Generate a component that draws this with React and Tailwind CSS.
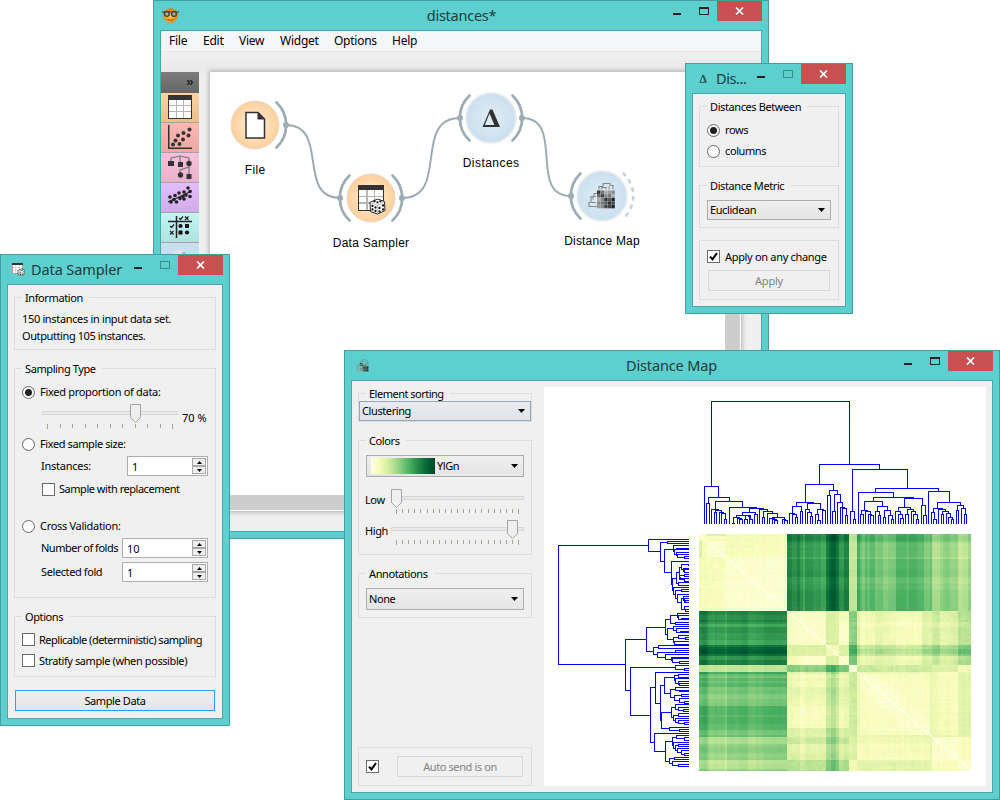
import React from "react";

/* ---------- window chrome ---------- */

function Win({ className, title, titleClass, icon, active, bodyClass, children }) {
  return (
    <section className={"absolute flex flex-col border border-[#449e9d] bg-[#5ccfce] px-[6px] pb-[6px] " + className}>
      <header className="relative flex h-[29px] shrink-0 items-center">
        {icon}
        <h1 className={"whitespace-nowrap font-['Noto_Sans',sans-serif] text-[14.5px] leading-[29px] text-[#1d3c3c] " + titleClass}>{title}</h1>
        <div className="absolute right-0 top-0 flex">
          <span className="mt-[12px] h-[2px] w-[8px] bg-[#222]" />
          <span className={"ml-[18px] mt-[6px] mr-[8px] h-[8px] w-[10px] border " + (active ? "border-t-2 border-[#222]" : "border-[#3e8b8a]")} />
          <span className="flex h-[20px] w-[45px] items-center justify-center bg-[#c75050]">
            <svg width="9" height="8" viewBox="0 0 9 8"><path d="M1 .5l7 7M8 .5l-7 7" stroke="#fff" strokeWidth="1.7" /></svg>
          </span>
        </div>
      </header>
      <div className={"flex min-h-0 flex-1 border border-[#45a9a8] bg-[#f0f0f0] " + bodyClass}>{children}</div>
    </section>
  );
}

/* ---------- form controls ---------- */

function Group({ title, className, legendClass = "", children }) {
  return (
    <fieldset className={"min-w-0 shrink-0 border border-[#dcdcdc] " + className}>
      {title && <legend className={"ml-[7px] h-[15px] whitespace-nowrap pl-[3px] pr-[6px] leading-[15px] " + legendClass}>{title}</legend>}
      <div className="flex flex-col">{children}</div>
    </fieldset>
  );
}

function Radio({ checked }) {
  return (
    <svg className="shrink-0" width="13" height="13" viewBox="0 0 13 13">
      <circle cx="6.5" cy="6.5" r="6" fill="#fff" stroke="#666" />
      {checked && <circle cx="6.5" cy="6.5" r="3.5" fill="#222" />}
    </svg>
  );
}

function Check({ checked }) {
  return (
    <span className="flex h-[13px] w-[13px] shrink-0 items-center justify-center border border-[#6b6b6b] bg-white">
      {checked && (
        <svg width="9" height="9" viewBox="0 0 9 9"><path d="M1 4.6l2.5 2.7L8 1" fill="none" stroke="#000" strokeWidth="2" /></svg>
      )}
    </span>
  );
}

function Combo({ className, children }) {
  return (
    <div className={"flex shrink-0 items-center border pl-[2px] pr-[5px] " + className}>
      {children}
      <svg className="ml-auto" width="7" height="4" viewBox="0 0 7 4"><path d="M0 0h7L3.500 4z" fill="#000" /></svg>
    </div>
  );
}

function Spin({ value, className }) {
  return (
    <div className={"flex h-[20px] shrink-0 border border-[#abadb3] bg-white p-px " + className}>
      <span className="flex-1 pl-[3px] leading-[17px] tracking-[0px]">{value}</span>
      <span className="flex w-[14px] flex-col">
        <span className="flex h-[8px] items-center justify-center border border-[#a8a8a8] bg-[#efefef]">
          <svg width="5" height="3" viewBox="0 0 5 3"><path d="M0 3h5L2.500 0z" fill="#000" /></svg>
        </span>
        <span className="flex h-[8px] items-center justify-center border border-[#a8a8a8] bg-[#efefef]">
          <svg width="5" height="3" viewBox="0 0 5 3"><path d="M0 0h5L2.500 3z" fill="#000" /></svg>
        </span>
      </span>
    </div>
  );
}

function Slider({ width, handle, first, step, count, className = "" }) {
  return (
    <svg className={"shrink-0 " + className} width={width} height="26" viewBox={`0 0 ${width} 26`}>
      <rect x=".5" y="7.500" width={width - 1} height="3" fill="#e7eaea" stroke="#d6d6d6" />
      {Array.from({ length: count }, (_, i) => (
        <rect key={i} x={Math.round(first + i * step)} y="20" width="1" height={i === 0 || i === count - 1 ? 5 : 4} fill="#a5a58f" shapeRendering="crispEdges" />
      ))}
      <path d={`M${handle + 0.5} .5h10v13l-5 5-5-5z`} fill="#efefef" stroke="#a3a3a3" />
    </svg>
  );
}

/* ---------- icons ---------- */

const OrangeLogo = () => (
  <svg className="ml-[2px] shrink-0" width="17" height="17" viewBox="0 0 17 17">
    <defs>
      <radialGradient id="og" cx=".45" cy=".6"><stop offset="0" stopColor="#ffc04a" /><stop offset="1" stopColor="#e8820c" /></radialGradient>
    </defs>
    <circle cx="8.500" cy="8.500" r="7.300" fill="url(#og)" />
    <path d="M0 5h17" stroke="#444" strokeWidth="1.200" />
    <circle cx="4.800" cy="7" r="2.300" fill="#b5aea2" stroke="#3b3b3b" strokeWidth="1.300" />
    <circle cx="12" cy="7" r="2.300" fill="#b5aea2" stroke="#3b3b3b" strokeWidth="1.300" />
    <path d="M5.500 12.500q3 1.600 6 0" fill="none" stroke="#b04a08" strokeWidth="1" />
  </svg>
);

const TableGlyph = () => (
  <g shapeRendering="crispEdges">
    <rect x=".5" y=".5" width="23" height="23" fill="#fff" stroke="#333" />
    <rect x="0" y="0" width="24" height="5" fill="#333" />
    <path d="M1 10.500h22M1 16.500h22M8.500 5v18M15.500 5v18" stroke="#b5b5b5" fill="none" />
  </g>
);

const Dots = ({ pts, r = 2, fill = "#333" }) => pts.map(([x, y], i) => <circle key={i} cx={x} cy={y} r={r} fill={fill} />);

const toolIcons = [
  { bg: "from-[#ffd39f] to-[#e9bf90]", art: <TableGlyph /> },
  {
    bg: "from-[#ffb7b1] to-[#eba8a3]",
    art: <g><path d="M.75 0v23.250H24" fill="none" stroke="#333" strokeWidth="1.500" /><Dots pts={[[5, 19.500], [7.500, 15.500], [11.500, 19], [10, 10.500], [15, 14.500], [15.500, 8], [20.500, 10.500], [21.500, 4.500]]} /></g>,
  },
  {
    bg: "from-[#fbc0dc] to-[#e8b2cb]",
    art: (
      <g><path d="M3 8V3l9-2 9 2v5M12 1v8M12 19v-4l9-3v8M21 8v6" fill="none" stroke="#777" strokeWidth="1.200" />
        <path d="M0 6h6v5H0zM10 7h5v5h-5zM18.500 19h5v5h-5z" fill="#333" /><circle cx="21" cy="8.500" r="2.700" fill="#333" /><circle cx="12.500" cy="20" r="2.700" fill="#333" /></g>
    ),
  },
  {
    bg: "from-[#e3bdfd] to-[#d0ace8]",
    art: <g><path d="M0 17L24 6" stroke="#333" strokeWidth="1.300" /><Dots r={1.8} fill="#222" pts={[[2, 12], [3, 17], [6, 14.500], [8.500, 17], [7, 10.500], [11, 8], [12, 13.500], [15, 11.500], [16, 7], [18, 10], [20, 3], [22, 6.500], [22, 11.500], [16, 14]]} /></g>,
  },
  {
    bg: "from-[#c4f4f4] to-[#b0e2e2]",
    art: (
      <g><path d="M0 6.500h24M8.500 1v22" stroke="#222" strokeWidth="1.500" />
        <path d="M11 3l1.500 1.500L15 1.500M2 11l1.500 1.500L6 9.500M17 1.500l3.500 3.500M20.500 1.500L17 5M2 16l3.500 3.500M5.500 16L2 19.500" fill="none" stroke="#222" strokeWidth="1.200" />
        <circle cx="12.500" cy="11" r="2.100" fill="#111" /><rect x="17" y="9" width="4" height="4" fill="#111" /><rect x="10.500" y="15.500" width="4" height="4" fill="#111" /><circle cx="19" cy="17.500" r="2.100" fill="#111" /></g>
    ),
  },
];

const Die = () => (
  <g>
    <path d="M8 .5L15 3l.5 9L8 15.500 1 13 .5 4z" fill="#fff" stroke="#222" />
    <path d="M1 4l7 3 7-4M8 7v8" fill="none" stroke="#999" strokeWidth=".6" />
    {[[5, 2.8], [8, 3.800], [11, 2.800], [3, 7.500], [6, 9], [3, 11], [6, 12.500], [10, 9.500], [13.500, 7], [10, 13], [13.500, 11]].map(([x, y], i) => <circle key={i} cx={x} cy={y} r="1.150" fill="#111" />)}
  </g>
);

const MapGlyph = () => {
  const tones = ["#333", "#777", "#aaa", "#999", "#888", "#666", "#444", "#888", "#777", "#aaa", "#aaa", "#888", "#333", "#555", "#222", "#888", "#777", "#555", "#333", "#444", "#999", "#888", "#444", "#444", "#222"];
  return (
    <g>
      <path d="M10 7V4h4V1h7v2h3v4M13 7V5h4v2M20 7V4M8 11H5v3H2v6H0v4h8M7 14H4v3M7 20H3" fill="none" stroke="#888" strokeWidth="1.100" />
      {tones.map((t, i) => <rect key={i} x={8 + (i % 5) * 3.6} y={8 + Math.floor(i / 5) * 3.6} width="3.400" height="3.400" fill={t} />)}
    </g>
  );
};

/* ---------- workflow canvas ---------- */

function Node({ x, y, kind, inp, out, label, ly, lw, children }) {
  return (
    <g>
      <circle cx={x} cy={y} r="24" fill={kind === "data" ? "url(#nd)" : "url(#nu)"} stroke={kind === "data" ? "#dbd6cf" : "#d9e3ea"} filter={kind === "data" ? undefined : "url(#sh)"} strokeWidth=".8" />
      {inp && <g><path d={`M${x - 21.5} ${y - 22.500}A31 31 0 0 0 ${x - 21.5} ${y + 22.500}`} fill="none" stroke="#9cacb4" strokeWidth="2.700" strokeLinecap="round" /><circle cx={x - 31} cy={y} r="3" fill="#9cacb4" /></g>}
      {out && <path d={`M${x + 21.5} ${y - 22.500}A31 31 0 0 1 ${x + 21.5} ${y + 22.500}`} fill="none" stroke={out === "open" ? "#cbd4d9" : "#9cacb4"} strokeWidth="2.700" strokeLinecap="round" strokeDasharray={out === "open" ? "2.500 6.200" : undefined} />}
      {out === "linked" && <circle cx={x + 31} cy={y} r="3" fill="#9cacb4" />}
      {children}
      <text x={x - 0.3} y={ly} textAnchor="middle" textLength={lw} className="fill-black font-['Liberation_Sans',sans-serif] text-[12px]">{label}</text>
    </g>
  );
}

function Workflow() {
  return (
    <svg className="block" width="515" height="423" viewBox="210 72 515 423">
      <defs>
        <radialGradient id="nd"><stop offset="0" stopColor="#fff0df" /><stop offset="1" stopColor="#ffd09a" /></radialGradient>
        <radialGradient id="nu"><stop offset="0" stopColor="#e3edf4" /><stop offset="1" stopColor="#c9e0ef" /></radialGradient>
        <filter id="sh" x="-20%" y="-20%" width="140%" height="140%"><feDropShadow dx="0" dy="0" stdDeviation="1.500" floodColor="#8fa0aa" floodOpacity=".6" /></filter>
      </defs>
      <g fill="none" stroke="#9cacb4" strokeWidth="2">
        <path d="M286 125C330 125 296 198 340 198" />
        <path d="M402 198C450 198 412 118 460 118" />
        <path d="M522 118C566 118 527 196 571 196" />
      </g>
      <Node x={255} y={125} kind="data" out="linked" label="File" ly={174} lw={20}>
        <path d="M246 112.500h12l6.500 6.500v19H246z" fill="#fff" stroke="#333" strokeWidth="1.500" /><path d="M257.500 112v7.500h7.500z" fill="#333" />
      </Node>
      <Node x={371} y={198} kind="data" inp out="linked" label="Data Sampler" ly={247} lw={76}>
        <g transform="translate(357.500 184.500) scale(1.120)"><TableGlyph /></g>
        <g transform="translate(369.500 198.500)"><Die /></g>
      </Node>
      <Node x={491} y={118} kind="un" inp out="linked" label="Distances" ly={167} lw={56}>
        <path fillRule="evenodd" d="M490 109.500h2.500l7.500 17.500H482.500zM489.500 113.500L484.800 125h9.600z" fill="#333" />
      </Node>
      <Node x={602} y={196} kind="un" inp out="open" label="Distance Map" ly={245} lw={75}>
        <g transform="translate(589 182.500)"><MapGlyph /></g>
      </Node>
    </svg>
  );
}

/* ---------- distance map ---------- */

/* Each merge: [left x, left child height, right x, right child height, merge height]; 431 is the leaf line. */
const merges = [
  [65, 319, 478, 253, 65], [43, 431, 85, 352, 319], [55, 370, 118, 364, 352], [49, 431, 58, 431, 370],
  [76, 388, 157, 382, 364], [65, 431, 86, 391, 388], [76, 397, 94, 397, 391], [73, 431, 79, 431, 397],
  [88, 431, 100, 400, 397], [94, 431, 106, 418, 400], [103, 431, 109, 431, 418], [118, 431, 200, 385, 382],
  [179, 397, 221, 388, 385], [157, 406, 197, 403, 397], [139, 412, 175, 409, 406], [130, 430, 148, 415, 412],
  [127, 431, 133, 431, 430], [142, 431, 154, 418, 415], [148, 431, 157, 431, 418], [167, 418, 181, 409, 406],
  [163, 431, 172, 431, 418], [178, 418, 182, 418, 409], [178, 431, 187, 431, 418], [193, 431, 203, 431, 403],
  [208, 431, 233, 394, 388], [220, 412, 248, 400, 394], [217, 431, 223, 431, 412], [233, 431, 262, 412, 400],
  [248, 415, 284, 418, 412], [239, 431, 254, 421, 415], [248, 431, 260, 421, 418], [254, 431, 262, 431, 421],
  [276, 431, 287, 421, 418], [284, 431, 292, 431, 421],
  [388, 313, 568, 268, 253], [347, 367, 430, 331, 313], [319, 379, 371, 370, 367], [307, 400, 334, 394, 379],
  [299, 431, 313, 403, 400], [307, 431, 319, 412, 403], [316, 431, 322, 431, 412], [331, 431, 337, 431, 394],
  [352, 388, 391, 388, 370], [346, 431, 358, 397, 388], [352, 431, 364, 409, 397], [361, 431, 367, 431, 409],
  [382, 403, 400, 391, 388], [376, 431, 386, 421, 403], [382, 431, 391, 431, 421], [397, 431, 406, 431, 391],
  [418, 346, 442, 343, 331], [412, 431, 421, 431, 346], [433, 394, 451, 367, 343], [427, 431, 436, 431, 394],
  [442, 431, 458, 382, 367], [451, 431, 463, 385, 382], [457, 431, 469, 406, 385], [466, 431, 472, 431, 406],
  [487, 394, 652, 325, 268], [481, 431, 493, 418, 394], [490, 431, 496, 431, 418], [556, 337, 745, 334, 325],
  [505, 431, 610, 352, 337], [550, 364, 670, 355, 352], [523, 391, 577, 379, 364], [514, 403, 533, 394, 391],
  [511, 431, 520, 431, 403], [526, 431, 541, 403, 394], [535, 431, 545, 406, 403], [541, 431, 550, 431, 406],
  [562, 394, 592, 391, 379], [556, 431, 568, 406, 394], [565, 431, 571, 431, 406], [583, 412, 601, 406, 391],
  [580, 431, 586, 431, 412], [595, 431, 607, 418, 406], [604, 431, 610, 431, 418], [643, 382, 697, 376, 355],
  [625, 394, 661, 388, 382], [616, 431, 631, 403, 394], [625, 431, 637, 415, 403], [631, 431, 640, 431, 415],
  [652, 403, 670, 394, 388], [646, 431, 655, 431, 403], [664, 431, 676, 403, 394], [670, 431, 682, 418, 403],
  [679, 431, 685, 431, 418], [694, 431, 705, 406, 376], [700, 431, 709, 431, 406], [715, 431, 778, 367, 334],
  [742, 385, 811, 376, 367], [730, 397, 758, 388, 385], [724, 431, 733, 418, 397], [730, 431, 739, 431, 418],
  [745, 431, 766, 394, 388], [757, 403, 775, 400, 394], [754, 431, 760, 431, 403], [769, 431, 782, 412, 400],
  [775, 431, 787, 418, 412], [784, 431, 790, 431, 418], [802, 391, 820, 385, 376], [799, 431, 805, 431, 391],
  [814, 431, 826, 403, 385], [823, 431, 829, 431, 403],
];

const half = (v) => Math.floor(v) + 0.5;
const topTree = merges
  .map(([a, ya, b, yb, t]) => {
    const X = (v) => half(690 + v / 3);
    const Y = (v) => half(380 + v / 3);
    return `M${X(a)} ${Y(ya)}V${Y(t)}H${X(b)}V${Y(yb)}`;
  })
  .join("");
const sideTree = merges
  .map(([a, ya, b, yb, t]) => {
    const Y = (v) => half(539.5 + ((v - 43) * 0.8655) / 3);
    const X = (v) => half(558.4 + ((v - 65) * 1.0683) / 3);
    return `M${X(ya)} ${Y(a)}H${X(t)}V${Y(b)}H${X(yb)}`;
  })
  .join("");

const YLGN = [[255, 255, 229], [247, 252, 185], [217, 240, 163], [173, 221, 142], [120, 198, 121], [65, 171, 93], [35, 132, 67], [0, 104, 55], [0, 69, 41]];
function ylgn(t) {
  const v = Math.max(0, Math.min(0.999, t)) * 8;
  const i = Math.floor(v);
  const f = v - i;
  return "rgb(" + YLGN[i].map((c, k) => Math.round(c + (YLGN[i + 1][k] - c) * f)).join(",") + ")";
}

const N = 105;
const rnd = (a, b) => {
  const s = Math.sin(a * 127.1 + b * 311.7 + 13.3) * 43758.5453;
  return s - Math.floor(s) - 0.5;
};
const steps = (list, v) => list.find(([end]) => v < end)[1];

const farFromA = [
  [293, 0.75], [305, 0.7], [315, 0.75], [321, 0.69], [330, 0.62], [354, 0.7], [378, 0.67], [393, 0.63], [399, 0.8], [408, 0.87], [423, 0.91], [432, 0.83], [447, 0.69], [462, 0.77],
  [486, 0.31], [495, 0.62], [502, 0.54], [510, 0.49], [516, 0.56], [524, 0.53], [540, 0.57], [552, 0.49], [565, 0.52], [580, 0.46], [603, 0.49], [630, 0.59], [645, 0.55], [666, 0.59], [686, 0.56], [705, 0.49], [711, 0.53],
  [735, 0.37], [742, 0.43], [765, 0.46], [789, 0.43], [804, 0.33], [818, 0.35], [829, 0.42],
];
const offsetInA = [[22, 0.04], [36, 0.07], [43, 0.01], [55, -0.03], [66, -0.01], [90, -0.02], [96, -0.06], [135, 0], [160, 0.02], [182, -0.03], [207, -0.01], [276, 0.02]];
const nearB = [[495, 0.2], [510, 0.12], [540, 0.14], [565, 0.18], [603, 0.16], [645, 0.12], [682, 0.12], [711, 0.22], [735, 0.27], [765, 0.2], [789, 0.22], [829, 0.33]];
const offsetInB = [[315, 0.02], [330, -0.03], [393, 0], [405, 0.15], [423, 0.2], [432, 0.14], [447, 0.03], [462, 0.05]];
const zone = (v) => (v < 276 ? 0 : v < 462 ? 1 : v < 486 ? 2 : 3);

function closeness(i, j) {
  if (i === j) return 0.005;
  const a = 12 + (Math.min(i, j) + 0.5) * 7.771;
  const b = 12 + (Math.max(i, j) + 0.5) * 7.771;
  const lo = Math.min(i, j);
  const hi = Math.max(i, j);
  const za = zone(a);
  const zb = zone(b);
  const grain = rnd(lo, hi) * 0.035;
  const streak = rnd(lo, za * 7 + zb) * 0.03 + rnd(hi, za * 3 + zb + 40) * 0.03;
  let t;
  if (za === 0 && zb > 0) return steps(farFromA, b) + steps(offsetInA, a) * (zb === 2 ? 0.4 : 1) + streak * 0.5 + grain * 0.2;
  if (za === 0) {
    if (a < 36) t = b < 36 ? 0.1 : b < 90 ? (a < 22 ? 0.24 : 0.13) : 0.14;
    else if (a < 90) t = b < 90 ? 0.06 : 0.12;
    else t = 0.065;
  } else if (za === 1 && zb === 1) {
    const ca = a > 393 && a < 432;
    const cb = b > 393 && b < 432;
    t = ca && cb ? 0.15 : ca || cb ? 0.24 : 0.09;
    if (a < 315 && b > 432) t = 0.13;
  } else if (za === 1 && zb === 2) t = 0.44 + steps(offsetInB, a);
  else if (za === 1) t = steps(nearB, b) + steps(offsetInB, a);
  else if (za === 2 && zb === 2) t = 0.03;
  else if (za === 2) t = b < 540 ? 0.3 : b < 711 ? 0.28 : b < 765 ? 0.22 : b < 789 ? 0.24 : 0.14;
  else if (hi === 89 || lo === 89) t = 0.19;
  else if (b < 705) t = a < 495 ? 0.17 : Math.abs(hi - lo) < 7 ? 0.07 : 0.1;
  else if (a < 705) t = b > 789 ? 0.21 : b > 735 ? 0.12 : 0.15;
  else t = b > 789 && a < 789 ? 0.11 : 0.07;
  return t + streak + grain;
}

const cells = [];
for (let r = 0; r < N; r++) {
  const y0 = Math.round((r * 237) / N);
  const y1 = Math.round(((r + 1) * 237) / N);
  for (let c = 0; c < N; c++) {
    const x0 = Math.round((c * 272) / N);
    const x1 = Math.round(((c + 1) * 272) / N);
    cells.push(<rect key={r * N + c} x={699 + x0} y={534 + y0} width={x1 - x0} height={y1 - y0} fill={ylgn(closeness(r, c))} />);
  }
}

function DistanceChart() {
  return (
    <svg className="block bg-white" width="442" height="399" viewBox="544 387 442 399">
      <path d={topTree} fill="none" stroke="#0000ff" strokeLinecap="square" shapeRendering="crispEdges" />
      <path d={sideTree} fill="none" stroke="#0000ff" shapeRendering="crispEdges" />
      <g shapeRendering="crispEdges">{cells}</g>
    </svg>
  );
}

/* ---------- windows ---------- */

function MainWindow() {
  return (
    <Win
      className="left-[153px] top-0 h-[539px] w-[616px]" active icon={<OrangeLogo />} title="distances*"
      titleClass="flex-1 pr-[18px] text-center tracking-[-0.25px]" bodyClass="flex-col"
    >
      <nav className="flex h-[21px] shrink-0 gap-[15px] border-b border-[#e6e7e9] bg-[#f5f6f7] pl-[8px] font-['Noto_Sans',sans-serif] text-[12px] leading-[20px] tracking-[-0.25px] text-black">
        <span className="w-[19px]">File</span><span className="w-[21px]">Edit</span><span className="w-[26px]">View</span>
        <span className="w-[39px]">Widget</span><span className="w-[43px]">Options</span><span>Help</span>
      </nav>
      <div className="flex min-h-0 flex-1 bg-linear-to-b from-[#f0f0f0] from-0% via-[#e9e9e9] via-[4%] to-[#efefef] to-[5%] pt-[20px]">
        <aside className="flex w-[38px] shrink-0 flex-col">
          <div className="h-[21px] bg-linear-to-b from-[#7d7d7d] to-[#666] pr-[6px] text-right font-['Liberation_Sans',sans-serif] text-[13px] font-bold leading-[20px] text-[#222]">»</div>
          {toolIcons.map((t, i) => (
            <div key={i} className={"flex h-[30px] justify-center border-b border-[#a3a3a3] bg-linear-to-b pt-[2px] " + t.bg}>
              <svg width="24" height="24" viewBox="0 0 24 24">{t.art}</svg>
            </div>
          ))}
          <div className="flex h-[30px] justify-center bg-[#c8dff0] pt-[7px]">
            <svg width="24" height="20" viewBox="0 0 24 20"><Dots pts={[[7, 3.500], [11.500, 1.500], [10, 5]]} r={2.2} fill="#e2e6e9" /><Dots pts={[[16, 3.500]]} r={1.6} fill="#9fb0bd" /></svg>
          </div>
        </aside>
        <div className="ml-[11px] h-[439px] w-[531px] shrink-0 border-b border-r border-white shadow-[0_0_5px_1px_rgba(0,0,0,0.27)]">
          <div className="h-full w-full border-b-[15px] border-r-[15px] border-[#cdcdcd] bg-white">
            <Workflow />
          </div>
        </div>
      </div>
    </Win>
  );
}

function DistancesWindow() {
  return (
    <Win
      className="left-[685px] top-[63px] h-[251px] w-[168px]" title="Dis..." titleClass="ml-[9px] tracking-[-0.4px]" bodyClass="flex-col pl-[6px] pt-[5px]"
      icon={<svg className="ml-[7px]" width="8" height="9" viewBox="0 0 8 9"><path d="M4 1L.8 8.300h6.200z" fill="none" stroke="#2c5454" /><path d="M4 1l3 7.300" stroke="#2c5454" strokeWidth="1.800" /></svg>}
    >
      <Group title="Distances Between" className="h-[68px] w-[140px]">
        <label className="ml-[7px] mt-[10px] flex h-[13px] items-center gap-[5px]"><Radio checked />rows</label>
        <label className="ml-[7px] mt-[8px] flex h-[13px] items-center gap-[5px]"><Radio />columns</label>
      </Group>
      <Group title="Distance Metric" className="mt-[11px] h-[50px] w-[140px]">
        <Combo className="ml-[7px] mt-[7px] h-[20px] w-[124px] border-[#acacac] bg-linear-to-b from-[#efefef] to-[#e5e5e5]">Euclidean</Combo>
      </Group>
      <Group className="mt-[12px] h-[60px] w-[140px]">
        <label className="ml-[7px] mt-[9px] flex h-[13px] items-center gap-[5px] tracking-[-0.32px]"><Check checked /><span className="mt-[2px]">Apply on any change</span></label>
        <button className="ml-[8px] mt-[7px] h-[21px] w-[122px] border border-[#d6d6d6] pt-[2px] tracking-[-0.2px] text-[#838383]">Apply</button>
      </Group>
    </Win>
  );
}

function SamplerWindow() {
  return (
    <Win
      className="left-0 top-[254px] h-[472px] w-[230px]" title="Data Sampler" titleClass="ml-[6px] tracking-[-0.1px]" bodyClass="flex-col pl-[6px] pt-[5px]"
      icon={
        <svg className="ml-[5px]" width="13" height="13" viewBox="0 0 28 28"><TableGlyph /><g transform="translate(12 12)"><Die /></g></svg>
      }
    >
      <Group title="Information" className="h-[60px] w-[202px]">
        <p className="ml-[7px] mt-[5px] h-[17px] leading-[17px] tracking-[-0.34px]">150 instances in input data set.</p>
        <p className="ml-[7px] h-[17px] leading-[17px]">Outputting 105 instances.</p>
      </Group>
      <Group title="Sampling Type" className="mt-[11px] h-[237px] w-[202px]">
        <label className="ml-[7px] mt-[6px] flex h-[20px] items-center gap-[5px] tracking-[-0.3px]"><Radio checked />Fixed proportion of data:</label>
        <div className="ml-[27px] flex h-[32px] pt-[2px]">
          <Slider width={136} handle={88} first={5} step={12.5} count={11} />
          <span className="ml-[4px] mt-[6px] leading-[16px] tracking-[0px]">70 %</span>
        </div>
        <label className="ml-[7px] flex h-[20px] items-center gap-[5px]"><Radio />Fixed sample size:</label>
        <div className="ml-[26px] mt-[2px] flex h-[20px] w-[167px] items-center justify-between tracking-[-0.25px]">Instances:<Spin value="1" className="w-[81px]" /></div>
        <label className="ml-[27px] mt-[6px] flex h-[14px] items-center gap-[4px] tracking-[-0.47px]"><Check />Sample with replacement</label>
        <label className="ml-[7px] mt-[20px] flex h-[20px] items-center gap-[5px] tracking-[-0.3px]"><Radio />Cross Validation:</label>
        <div className="ml-[26px] mt-[2px] flex h-[20px] w-[167px] items-center justify-between tracking-[-0.5px]">Number of folds<Spin value="10" className="w-[86px]" /></div>
        <div className="ml-[26px] mt-[4px] flex h-[20px] w-[167px] items-center justify-between">Selected fold<Spin value="1" className="w-[86px]" /></div>
      </Group>
      <Group title="Options" className="mt-[11px] h-[68px] w-[202px]">
        <label className="ml-[7px] mt-[9px] flex h-[13px] items-center gap-[4px] tracking-[-0.5px]"><Check /><span className="mt-[2px]">Replicable (deterministic) sampling</span></label>
        <label className="ml-[7px] mt-[8px] flex h-[13px] items-center gap-[4px]"><Check /><span className="mt-[2px]">Stratify sample (when possible)</span></label>
      </Group>
      <button className="ml-px mt-[13px] h-[21px] w-[200px] shrink-0 border border-[#3399ff] bg-linear-to-b from-[#f0f0f0] to-[#e4e4e4] pt-[2px]">Sample Data</button>
    </Win>
  );
}

function MapWindow() {
  return (
    <Win
      className="left-[344px] top-[350px] h-[450px] w-[656px]" active title="Distance Map" titleClass="flex-1 pr-[19px] text-center tracking-[-0.15px]" bodyClass=""
      icon={<svg className="ml-[5px]" width="13" height="13" viewBox="0 0 27 27"><MapGlyph /></svg>}
    >
      <div className="ml-[6px] flex w-[174px] shrink-0 flex-col pb-[6px] pt-[5px]">
        <Group title="Element sorting" className="h-[36px]" legendClass="tracking-[-0.5px]">
          <Combo className="h-[20px] w-[172px] border-[#97a7b9] bg-linear-to-b from-[#eaecef] to-[#dfe3e8]">Clustering</Combo>
        </Group>
        <Group title="Colors" className="mt-[11px] h-[122px]">
          <Combo className="ml-[7px] mt-[7px] h-[22px] w-[158px] border-[#acacac] bg-linear-to-b from-[#efefef] to-[#e5e5e5]">
            <span className="ml-[2px] mr-[2px] h-[16px] w-[64px] bg-[linear-gradient(90deg,#ffffe5,#f7fcb9,#d9f0a3,#addd8e,#78c679,#41ab5d,#238443,#006837,#004529)]" />YlGn
          </Combo>
          <div className="ml-[6px] mt-[12px] flex h-[26px]"><span className="mt-[3px] w-[26px] leading-[16px]">Low</span><Slider width={133} handle={0} first={5} step={6.1} count={21} /></div>
          <div className="ml-[6px] mt-[5px] flex h-[26px]"><span className="mt-[3px] w-[26px] leading-[16px]">High</span><Slider width={133} handle={116} first={5} step={6.1} count={21} /></div>
        </Group>
        <Group title="Annotations" className="mt-[11px] h-[52px]">
          <Combo className="ml-[7px] mt-[7px] h-[22px] w-[158px] border-[#acacac] bg-linear-to-b from-[#efefef] to-[#e5e5e5]">None</Combo>
        </Group>
        <Group className="mt-auto h-[39px]">
          <div className="ml-[7px] mt-[8px] flex h-[21px] items-center gap-[18px]">
            <Check checked /><button className="h-[21px] w-[126px] border border-[#d6d6d6] pt-[2px] text-[#838383]">Auto send is on</button>
          </div>
        </Group>
      </div>
      <div className="ml-[12px] mt-[6px]"><DistanceChart /></div>
    </Win>
  );
}

export default function App() {
  return (
    <main className="relative h-[800px] w-[1000px] overflow-hidden whitespace-nowrap bg-white font-['Noto_Sans',sans-serif] text-[11px] tracking-[-0.4px] text-black">
      <MainWindow />
      <DistancesWindow />
      <SamplerWindow />
      <MapWindow />
    </main>
  );
}
